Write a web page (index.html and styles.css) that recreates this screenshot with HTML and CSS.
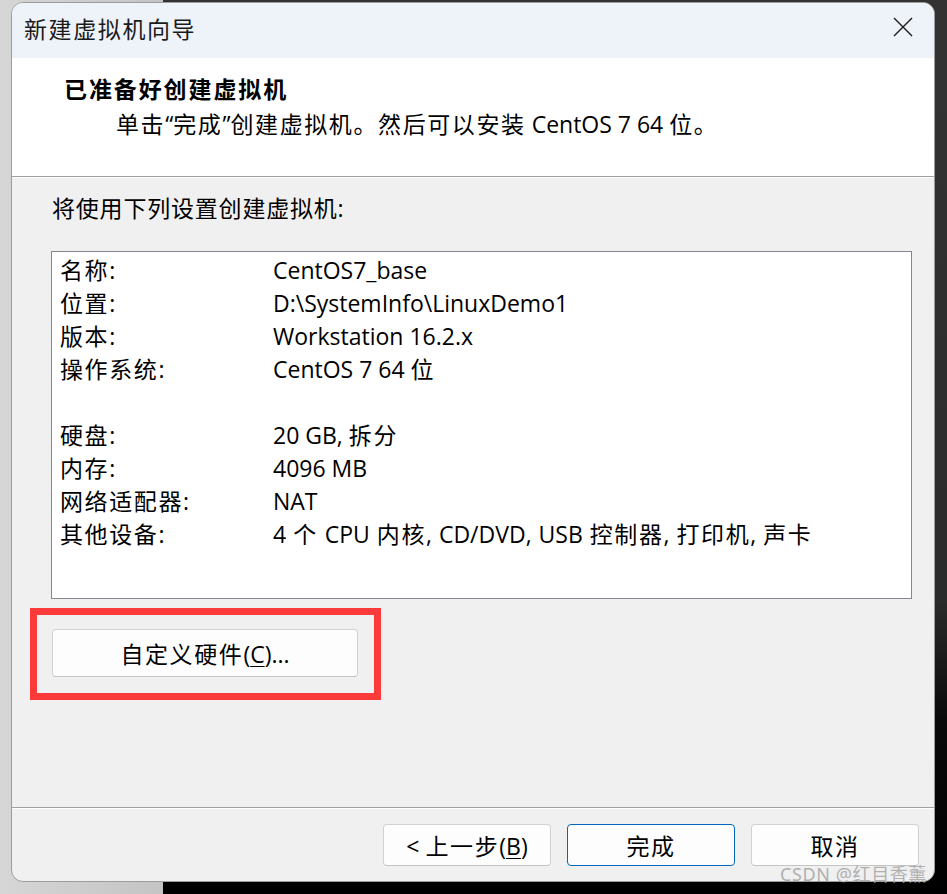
FILE: index.html
```html
<!DOCTYPE html>
<html lang="zh-CN">
<head>
<meta charset="utf-8">
<title>新建虚拟机向导</title>
<link rel="stylesheet" href="styles.css">
</head>
<body>
<div class="dialog">
  <div class="titlebar">
    <span class="title zh">新建虚拟机向导</span>
    <svg class="close" width="20" height="20" viewBox="0 0 20 20" aria-label="关闭"><path d="M1 1 L19 19 M19 1 L1 19" stroke="#1b1b1b" stroke-width="1.4" fill="none"/></svg>
  </div>
  <div class="header">
    <div class="h-title zh">已准备好创建虚拟机</div>
    <div class="h-sub"><span class="zh">单击</span>“<span class="zh">完成</span>”<span class="zh">创建虚拟机。然后可以安装</span> CentOS 7 64 <span class="zh">位。</span></div>
  </div>
  <div class="sep"></div>
  <div class="content">
    <div class="intro"><span class="zh tight">将使用下列设置创建虚拟机</span>:</div>
    <div class="listbox">
      <div class="row"><span class="lbl">名称:</span><span class="val">CentOS7_base</span></div>
      <div class="row"><span class="lbl">位置:</span><span class="val">D:\SystemInfo\LinuxDemo1</span></div>
      <div class="row"><span class="lbl">版本:</span><span class="val">Workstation 16.2.x</span></div>
      <div class="row"><span class="lbl">操作系统:</span><span class="val">CentOS 7 64 <span class="zh">位</span></span></div>
      <div class="row"></div>
      <div class="row"><span class="lbl">硬盘:</span><span class="val">20 GB, <span class="zh">拆分</span></span></div>
      <div class="row"><span class="lbl">内存:</span><span class="val">4096 MB</span></div>
      <div class="row"><span class="lbl">网络适配器:</span><span class="val">NAT</span></div>
      <div class="row"><span class="lbl">其他设备:</span><span class="val wide">4 <span class="zh">个</span> CPU <span class="zh">内核</span>, CD/DVD, USB <span class="zh">控制器</span>, <span class="zh">打印机</span>, <span class="zh">声卡</span></span></div>
    </div>
    <button class="btn custom"><span class="zh">自定义硬件</span>(<u>C</u>)...</button>
  </div>
  <div class="sep"></div>
  <div class="footer">
    <button class="btn foot">&lt; <span class="zh">上一步</span>(<u>B</u>)</button>
    <button class="btn foot primary"><span class="zh">完成</span></button>
    <button class="btn foot"><span class="zh">取消</span></button>
  </div>
  <div class="annot"></div>
</div>
<div class="watermark">CSDN @红目香薰</div>
</body>
</html>
```
FILE: styles.css
```css
html, body {
  margin: 0;
  padding: 0;
}

body {
  position: relative;
  width: 947px;
  height: 894px;
  overflow: hidden;
  box-sizing: border-box;
  padding: 2px 0 0 11px;
  background:
    linear-gradient(to right, #d6d6d6 0, #c4c4c4 163px, transparent 163px),
    linear-gradient(to bottom, #333333 0, #2b2b2b 600px, #0a0a0a 720px, #000000 100%);
  font-family: "Open Sans", "Noto Sans CJK SC", sans-serif;
  font-size: 23px;
  color: #000;
}

.zh {
  letter-spacing: 1.6px;
}

.zh.tight {
  letter-spacing: 0.8px;
}

.dialog {
  position: relative;
  width: 924px;
  height: 880px;
  box-sizing: border-box;
  border: 1px solid #9c9c9c;
  border-radius: 12px;
  background: #f0f0f0;
  overflow: hidden;
  display: flex;
  flex-direction: column;
}

.titlebar {
  flex-shrink: 0;
  height: 55px;
  box-sizing: border-box;
  background: #eef2f9;
  display: flex;
  align-items: center;
  justify-content: space-between;
  padding: 0 21px 4px 12px;
  color: #1a1a1a;
}

.title {
  line-height: 30px;
}

.close {
  margin-top: -4px;
}

.header {
  flex-shrink: 0;
  height: 118px;
  box-sizing: border-box;
  background: #fff;
  padding: 16px 0 0 52px;
}

.h-title {
  line-height: 30px;
  font-weight: 700;
  letter-spacing: 1.9px;
}

.h-sub {
  margin-top: 5px;
  padding-left: 52px;
  line-height: 30px;
}

.sep {
  flex-shrink: 0;
  height: 1px;
  background: #a0a0a0;
  border-bottom: 1px solid #ffffff;
}

.content {
  flex: 1;
  padding: 15px 0 0 39px;
}

.intro {
  line-height: 30px;
  padding-left: 1px;
}

.listbox {
  margin-top: 28px;
  width: 861px;
  height: 348px;
  box-sizing: border-box;
  border: 1px solid #828790;
  background: #fff;
  padding: 2px 0 0 8px;
}

.row {
  display: grid;
  grid-template-columns: 212px 1fr;
  height: 33px;
  line-height: 33px;
  white-space: nowrap;
}

.val {
  padding-left: 1px;
}

.val.wide {
  word-spacing: 1px;
}

.lbl {
  letter-spacing: 1.6px;
}

.btn {
  font-family: inherit;
  font-size: 23px;
  color: #000;
  background: #fdfdfd;
  border: 1px solid #d2d2d2;
  border-bottom-color: #c4c4c4;
  border-radius: 4px;
  padding: 0;
  box-sizing: border-box;
}

.custom {
  display: block;
  margin: 30px 0 0 1px;
  width: 306px;
  height: 48px;
}

.footer {
  flex-shrink: 0;
  height: 72px;
  box-sizing: border-box;
  display: flex;
  justify-content: flex-end;
  gap: 16px;
  padding: 15px 15px 0 0;
}

.foot {
  width: 168px;
  height: 42px;
}

.primary {
  border-color: #0067c0;
}

u {
  text-decoration-thickness: 1px;
  text-underline-offset: 3px;
}

.annot {
  position: absolute;
  left: 18px;
  top: 605px;
  width: 351px;
  height: 92px;
  box-sizing: border-box;
  border: 7px solid #fc3a3a;
}

.watermark {
  position: absolute;
  left: 780px;
  top: 864px;
  font-family: "Noto Sans", "Noto Sans CJK SC", sans-serif;
  font-size: 18px;
  line-height: 20px;
  color: #b0b0b0;
  letter-spacing: 0.6px;
}
```
